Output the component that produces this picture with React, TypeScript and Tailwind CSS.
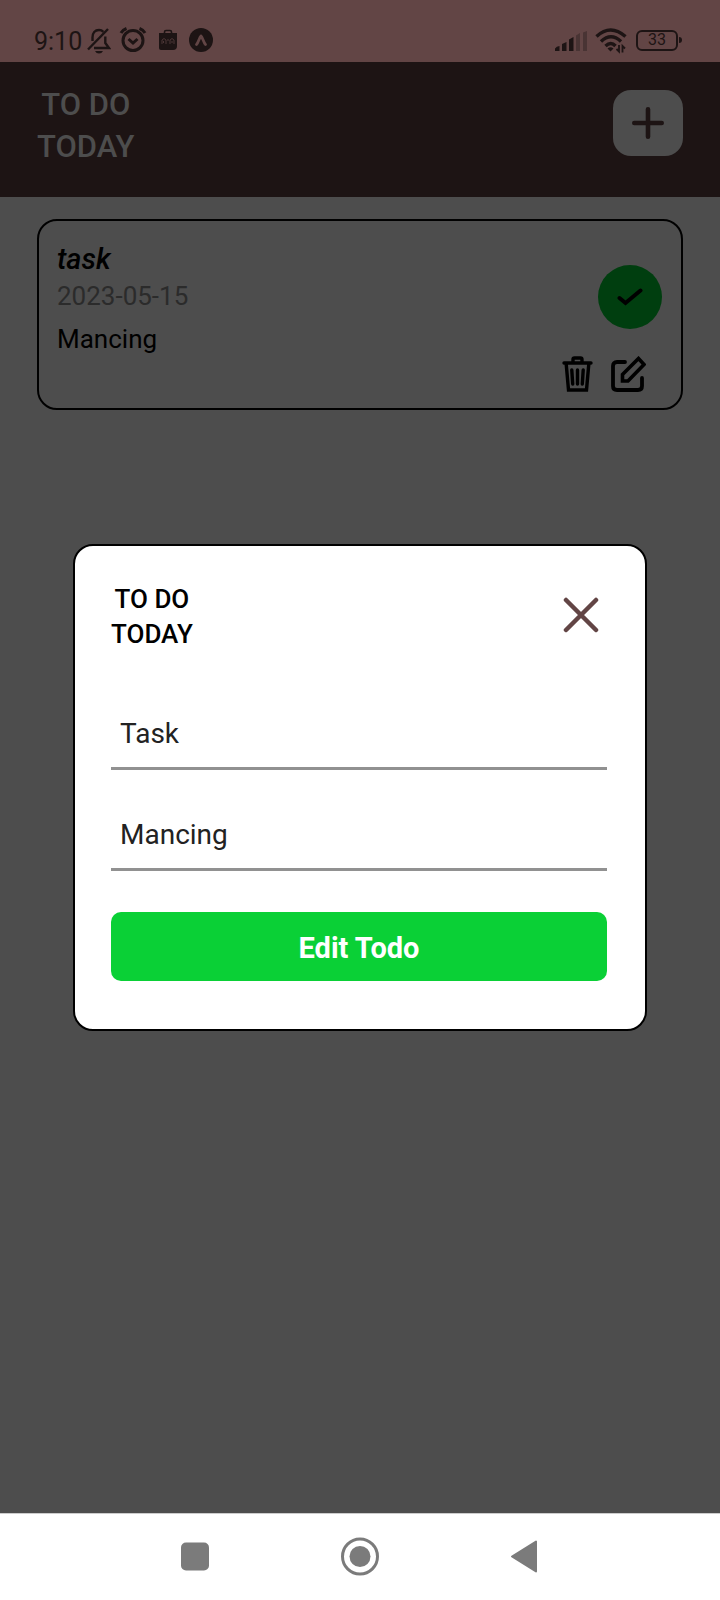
import type { ReactNode } from "react";

function StatusBar() {
  return (
    <div className="flex h-[62px] items-end justify-between bg-[#624545] pr-[38px] pb-1.5 pl-[34px] text-[#1d1414]">
      <div className="flex h-8 items-center">
        <span className="w-[49px] pt-[3px] text-[25px] leading-8">9:10</span>
        <svg className="ml-1 h-7 w-6" viewBox="0 0 24 28" fill="none" stroke="currentColor" strokeWidth="2.4">
          <path d="M5.500 15v-3.500C5.500 7 8 4 12 4c2 0 3.300.7 4.400 1.800M18.300 10.500V17l3.700 5H7" />
          <path d="M1 23.500 21 3" />
          <path d="M8 25h8q-1.200 2.500-4 2.500T8 25z" fill="currentColor" stroke="none" />
        </svg>
        <svg className="ml-2 h-7 w-7" viewBox="0 0 28 28" fill="none" stroke="currentColor" strokeWidth="3">
          <circle cx="14" cy="14.500" r="10" />
          <path d="m9.500 13 4.500 4 4.500-4" />
          <path d="M2 7q1.500-3 5.500-4.500M26 7q-1.500-3-5.500-4.500" />
        </svg>
        <svg className="ml-3 h-7 w-[18px]" viewBox="0 0 18 28">
          <path d="M0 7h18v13q0 4-4 4H2q-2 0-2-2z" fill="currentColor" />
          <path d="M5.500 8V6q0-1.500 1.500-1.500h4q1.500 0 1.500 1.500v2" fill="none" stroke="currentColor" strokeWidth="1.600" />
          <path d="M3 18v-4q2-3 4 0v4m1-4h2m1 4v-4q2-3 4 0v4M4.500 17v-2M13 17v-2" fill="none" stroke="#624545" strokeWidth=".7" />
        </svg>
        <svg className="ml-3 h-7 w-6" viewBox="0 0 24 28">
          <circle cx="12" cy="14" r="12" fill="currentColor" />
          <path d="M7.500 18.500c2-2 3-7.500 4.500-8.500 1.500 1 2.500 6.500 4.500 8.500" fill="none" stroke="#624545" strokeWidth="2.800" strokeLinecap="round" strokeLinejoin="round" />
        </svg>
      </div>
      <div className="flex h-8 items-center">
        <svg className="h-7 w-8" viewBox="0 0 32 28" fill="currentColor">
          <path d="M0 25v-2.500Q1.500 20 4.500 20v5zM7 25v-7l4.500-2v9zM14 25V13.500l4.500-2.500v14z" />
          <path d="M21 25V9.500L25 7v18zM28 25V6.500L32 5v20z" opacity=".35" />
        </svg>
        <svg className="ml-2 h-7 w-8" viewBox="0 0 32 28" fill="none" stroke="currentColor" strokeWidth="3.400">
          <path d="M1.500 10.500q14-13 29 0M6 15.500q10-9.500 20 0M10.500 20q5.500-5 10 0" />
          <path d="M12.500 22.500q3-2.500 6 0L15.500 25.500z" fill="currentColor" stroke="none" />
          <path d="M24 19v6.500l-2.500-2.500M27.500 26.500V20l2.500 2.500" strokeWidth="1.800" />
        </svg>
        <div className="ml-[9px] flex h-[21px] w-[42px] items-center justify-center rounded-md border-2 border-current text-base leading-4">33</div>
        <div className="ml-px h-[6px] w-[3px] rounded-r bg-current" />
      </div>
    </div>
  );
}

function Header() {
  return (
    <header className="flex h-[135px] items-start justify-between bg-[#1d1414] px-[37px] pt-[22px]">
      <h1 className="text-center text-[31px] leading-[42px] font-medium text-[#4d4d4d]">
        TO DO
        <br />
        TODAY
      </h1>
      <button aria-label="Add todo" className="mt-[6px] flex h-[66px] w-[70px] items-center justify-center rounded-[18px] bg-[#4d4d4d] text-[#1d1414]">
        <svg className="h-8 w-8" viewBox="0 0 32 32" stroke="currentColor" strokeWidth="4.600" strokeLinecap="round">
          <path d="M2.300 16h27.400M16 2.300v27.400" />
        </svg>
      </button>
    </header>
  );
}

function TodoCard() {
  return (
    <article className="mx-[37px] mt-[22px] flex h-[191px] justify-between rounded-[20px] border-2 border-black pt-5 pr-[19px] pl-[18px] text-black">
      <div>
        <h2 className="text-[29px] leading-9 font-medium italic">task</h2>
        <p className="text-[26px] leading-[38px] text-[#2b2b2b]">2023-05-15</p>
        <p className="mt-1 text-[26px] leading-10">Mancing</p>
      </div>
      <div className="flex flex-col items-end pt-6">
        <button aria-label="Complete todo" className="flex h-16 w-16 items-center justify-center rounded-full bg-[#003e0f]">
          <svg className="h-[18px] w-[26px]" viewBox="0 0 26 18" fill="none" stroke="currentColor" strokeWidth="4" strokeLinecap="round">
            <path d="m2.500 10 6 5L23.500 2.500" />
          </svg>
        </button>
        <div className="mr-4 flex gap-[18px] pt-[27px]">
          <button aria-label="Delete todo">
            <svg className="h-9 w-[31px]" viewBox="0 0 31 36" fill="none" stroke="currentColor" strokeWidth="3.400">
              <path d="M2 7h27M11 7V3.500q0-1.500 1.500-1.500h6q1.500 0 1.500 1.500V7" strokeLinecap="round" />
              <path d="m4.200 8 2.300 26h18L26.800 8" />
              <path d="m9.800 14 .9 14M15.500 14v14M21.200 14l-.9 14" strokeLinecap="round" />
            </svg>
          </button>
          <button aria-label="Edit todo">
            <svg className="h-9 w-[35px]" viewBox="0 0 35 36" fill="none" stroke="currentColor" strokeWidth="3.800" strokeLinecap="round">
              <path d="M14 6H6Q2 6 2 10v20q0 4 4 4h21q4 0 4-4V22" />
              <path d="M11.500 18.500 27.500 2.500l5.500 6-16 16.500h-5.500z" strokeWidth="3.600" />
            </svg>
          </button>
        </div>
      </div>
    </article>
  );
}

function Field({ id, label, value }: { id: string; label: string; value: string }) {
  return (
    <input
      id={id}
      aria-label={label}
      defaultValue={value}
      className="block h-[71px] w-full border-b-[3px] border-[#919191] bg-transparent px-[9px] text-[28px] text-[#222] outline-none"
    />
  );
}

function EditDialog() {
  return (
    <div className="absolute inset-0 flex items-center px-[73px]">
      <form
        role="dialog"
        aria-label="Edit todo"
        onSubmit={(event) => event.preventDefault()}
        className="w-full rounded-[20px] border-2 border-black bg-white pt-[36px] pr-[38px] pb-12 pl-9"
      >
        <div className="flex items-start justify-between">
          <h2 className="text-center text-[26px] leading-[35px] font-medium text-black">
            TO DO
            <br />
            TODAY
          </h2>
          <button type="button" aria-label="Close" className="mt-[15px] mr-2 text-[#624545]">
            <svg className="h-9 w-9" viewBox="0 0 36 36" stroke="currentColor" strokeWidth="4.500" strokeLinecap="round">
              <path d="m3 3 30 30M33 3 3 33" />
            </svg>
          </button>
        </div>
        <div className="mt-[47px] flex flex-col gap-[30px]">
          <Field id="todo-title" label="Title" value="Task" />
          <Field id="todo-description" label="Description" value="Mancing" />
        </div>
        <button type="submit" className="mt-[41px] h-[69px] w-full rounded-[10px] bg-[#0ad036] pt-1 text-[29px] font-bold text-white">
          Edit Todo
        </button>
      </form>
    </div>
  );
}

function NavButton({ label, children }: { label: string; children: ReactNode }) {
  return (
    <button aria-label={label} className="flex w-10 items-center justify-center">
      <svg className="h-10 w-10" viewBox="0 0 40 40" fill="currentColor">
        {children}
      </svg>
    </button>
  );
}

function NavigationBar() {
  return (
    <nav className="flex h-[87px] justify-center gap-[124px] border-t border-[#ccc] bg-white text-[#7b7b7b]">
      <NavButton label="Recent apps">
        <rect x="5" y="5.500" width="28" height="28" rx="5" />
      </NavButton>
      <NavButton label="Home">
        <circle cx="20" cy="19.500" r="17.500" fill="none" stroke="currentColor" strokeWidth="3" />
        <circle cx="20" cy="19.500" r="10.500" />
      </NavButton>
      <NavButton label="Back">
        <path d="M8 19.500 32 4.500v30z" stroke="currentColor" strokeWidth="2" strokeLinejoin="round" />
      </NavButton>
    </nav>
  );
}

export default function App() {
  return (
    <div className="flex min-h-screen flex-col bg-[#4d4d4d] font-[Roboto,sans-serif]">
      <StatusBar />
      <main className="relative flex-1">
        <Header />
        <TodoCard />
        <EditDialog />
      </main>
      <NavigationBar />
    </div>
  );
}
